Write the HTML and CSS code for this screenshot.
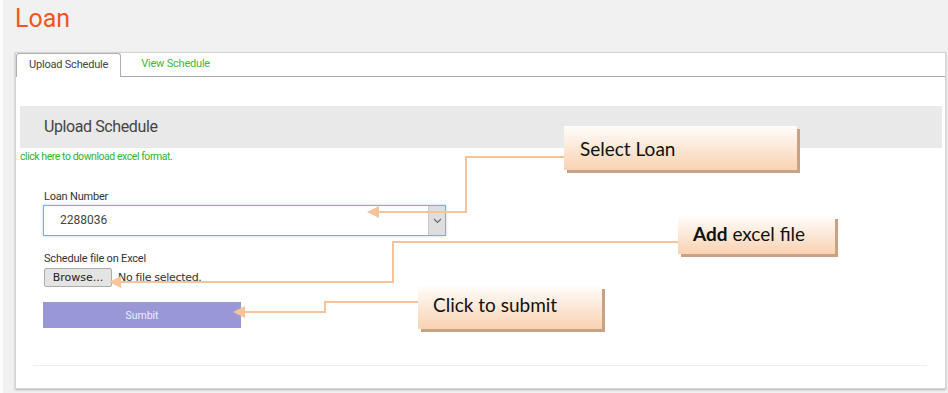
FILE: index.html
```html
<!DOCTYPE html>
<html lang="en">

<head>
    <meta charset="UTF-8" />
    <title>Loan - Upload Schedule</title>
    <link rel="stylesheet" href="styles.css">
</head>

<body>

    <h1 class="page-title">Loan</h1>

    <div class="panel">
        <ul class="tabs">
            <li class="tab active">Upload Schedule</li>
            <li class="tab">View Schedule</li>
        </ul>

        <div class="panel-body">
            <div class="section-head">Upload Schedule</div>
            <a class="download-link" href="#">click here to download excel format.</a>

            <form class="upload-form">
                <label class="field-label">Loan Number</label>
                <div class="select-box">
                    <span class="select-value">2288036</span>
                    <span class="select-arrow">
                        <svg width="9" height="6" viewBox="0 0 9 6"><path d="M1 1l3.5 3.5L8 1" fill="none" stroke="#666" stroke-width="1.1"/></svg>
                    </span>
                </div>

                <label class="field-label file-label">Schedule file on Excel</label>
                <div class="file-row">
                    <span class="browse-btn">Browse...</span>
                    <span class="file-name">No file selected.</span>
                </div>

                <button type="button" class="submit-btn">Sumbit</button>
            </form>

            <div class="divider"></div>
        </div>
    </div>

    <!-- annotation overlay -->
    <svg class="connectors" width="948" height="393" viewBox="0 0 948 393">
        <g fill="none" stroke="#f9c39a" stroke-width="2">
            <polyline points="561,157 463,157 463,212 374,212" />
            <polyline points="675,242 390,242 390,282 116,282" />
            <polyline points="415,302 322,302 322,312 240,312" />
        </g>
        <g fill="#f9c39a">
            <polygon points="364,212 376,206 376,218" />
            <polygon points="106,282 118,276 118,288" />
            <polygon points="230,312 242,306 242,318" />
        </g>
    </svg>

    <div class="callout callout-loan"><span>Select Loan</span></div>
    <div class="callout callout-file"><span><b>Add</b> excel file</span></div>
    <div class="callout callout-submit"><span>Click to submit</span></div>

</body>

</html>
```

FILE: styles.css
```css
body {
    margin: 0;
    padding: 0 2px 0 15px;
    background: #f1f1f1;
    border-left: 3px solid #fbfbfb;
    font-family: Roboto, "Liberation Sans", sans-serif;
    color: #333;
    position: relative;
    height: 393px;
    box-sizing: border-box;
    overflow: hidden;
}

.page-title {
    margin: 0;
    height: 52px;
    line-height: 38px;
    margin-left: -3px;
    font-size: 25px;
    font-weight: 400;
    color: #f1561f;
}

.panel {
    margin-left: -3px;
    background: #fff;
    border: 1px solid #d4d4d4;
    box-shadow: 0 1px 2px #b5b5b5;
    height: 337px;
    box-sizing: border-box;
}

.tabs {
    list-style: none;
    margin: 0;
    padding: 0;
    display: flex;
    height: 23px;
    border-bottom: 1px solid #a9a9a9;
}

.tab {
    font-size: 11px;
    line-height: 22px;
    padding: 0 13px;
    color: #3cb83c;
    letter-spacing: -0.2px;
}

.tab.active {
    color: #444;
    background: #fff;
    border: 1px solid #b0b0b0;
    border-bottom: none;
    border-radius: 3px 3px 0 0;
    height: 23px;
    padding: 0 12px;
    margin-right: 7px;
}

.panel-body {
    padding: 29px 3px 0 4px;
}

.section-head {
    height: 42px;
    line-height: 42px;
    background: #e9e9e9;
    padding-left: 24px;
    font-size: 16px;
    letter-spacing: -0.4px;
    color: #444;
}

.download-link {
    display: block;
    font-size: 10.5px;
    line-height: 14px;
    margin-top: 2px;
    color: #2fb52f;
    text-decoration: none;
    letter-spacing: -0.45px;
}

.upload-form {
    padding-left: 23px;
    display: flex;
    flex-direction: column;
    align-items: flex-start;
}

.field-label {
    font-size: 11px;
    line-height: 12px;
    margin-top: 27px;
    color: #333;
    padding-left: 1px;
    letter-spacing: -0.2px;
}

.file-label {
    margin-top: 17px;
}

.select-box {
    margin-top: 2px;
    width: 403px;
    height: 31px;
    box-sizing: border-box;
    border: 1px solid #79aee2;
    box-shadow: 0 0 3px #bcd8f3;
    display: flex;
    align-items: stretch;
}

.select-value {
    flex: 1;
    font-size: 12px;
    line-height: 29px;
    padding-left: 16px;
    color: #444;
}

.select-arrow {
    width: 16px;
    background: #dedede;
    border-left: 1px solid #c9c9c9;
    display: flex;
    align-items: center;
    justify-content: center;
}

.file-row {
    margin-top: 3px;
    display: flex;
    align-items: center;
    font-family: "DejaVu Sans", sans-serif;
    font-size: 11px;
}

.browse-btn {
    width: 68px;
    height: 19px;
    box-sizing: border-box;
    line-height: 17px;
    text-align: center;
    background: #e4e4e4;
    border: 1px solid #adadad;
    border-radius: 2px;
    color: #222;
    margin-left: 1px;
}

.file-name {
    margin-left: 6px;
    color: #333;
    letter-spacing: -0.3px;
}

.submit-btn {
    margin-top: 15px;
    width: 198px;
    height: 26px;
    border: none;
    background: #9a97d7;
    color: #eeeefa;
    font-family: Roboto, sans-serif;
    font-size: 10.5px;
}

.divider {
    margin: 37px 15px 0 13px;
    border-top: 1px solid #efefef;
}

.connectors {
    position: absolute;
    left: 0;
    top: 0;
    pointer-events: none;
}

.callout {
    position: absolute;
    box-sizing: border-box;
    background: linear-gradient(#fffdfb, #f9d2b1);
    box-shadow: 3px 3px 0 #c9a283;
    font-family: Lato, "Open Sans", sans-serif;
    font-size: 19px;
    color: #111;
    padding-left: 16px;
    display: flex;
    align-items: center;
}

.callout-loan {
    left: 561px;
    top: 126px;
    width: 233px;
    height: 44px;
    padding-bottom: 0;
}

.callout-file {
    left: 675px;
    top: 216px;
    width: 157px;
    height: 38px;
    padding-bottom: 4px;
    padding-left: 15px;
}

.callout-submit {
    left: 415px;
    top: 286px;
    width: 184px;
    height: 43px;
    padding-bottom: 7px;
    padding-left: 15px;
}
```
